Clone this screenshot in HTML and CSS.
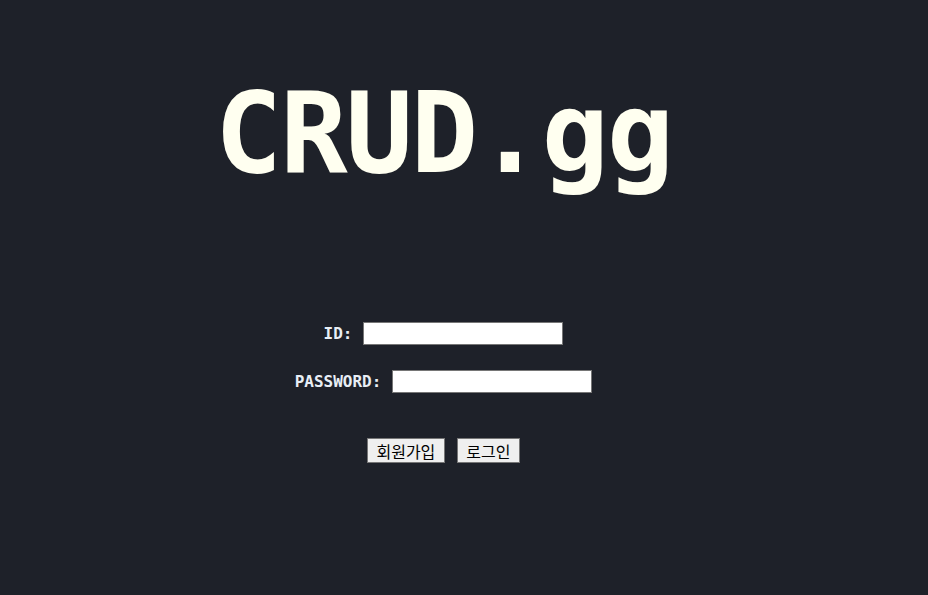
FILE: index.html
```html
<!DOCTYPE html>
<html lang="ko">
<head>
<meta charset="utf-8">
<title>CRUD.gg</title>
<link rel="stylesheet" href="styles.css">
</head>
<body>
<main class="page">
  <h1 class="logo">CRUD.gg</h1>
  <form class="login">
    <div class="row">
      <label class="label" for="id">ID:</label>
      <input class="field" id="id" type="text">
    </div>
    <div class="row">
      <label class="label" for="pw">PASSWORD:</label>
      <input class="field" id="pw" type="password">
    </div>
    <div class="actions">
      <button class="btn" type="button">회원가입</button>
      <button class="btn" type="submit">로그인</button>
    </div>
  </form>
</main>
</body>
</html>
```
FILE: styles.css
```css
html, body {
  margin: 0;
  padding: 0;
  background: #1e2129;
  height: 100%;
}
.page {
  box-sizing: border-box;
  padding: 77px 41px 0 0;
  display: flex;
  flex-direction: column;
  align-items: center;
}
.logo {
  margin: 0;
  font-family: "DejaVu Sans Mono", "Liberation Mono", monospace;
  font-weight: bold;
  font-size: 112px;
  line-height: 112px;
  letter-spacing: -2.1px;
  color: #fffff0;
}
.login {
  margin-top: 133px;
  display: flex;
  flex-direction: column;
  align-items: center;
  gap: 25px;
}
.row {
  display: flex;
  align-items: center;
  height: 23px;
}
.label {
  font-family: "DejaVu Sans Mono", "Liberation Mono", monospace;
  font-weight: bold;
  font-size: 16px;
  color: #e8eef5;
  margin-right: 11px;
}
.field {
  box-sizing: border-box;
  width: 200px;
  height: 23px;
  border: 1px solid #767676;
  padding: 1px 2px;
  background: #fff;
  margin: 0;
}
.actions {
  margin-top: 20px;
  display: flex;
  gap: 12px;
}
.btn {
  box-sizing: border-box;
  height: 25px;
  padding: 0 8.5px;
  border: 1px solid #767676;
  border-radius: 0;
  background: #efefef;
  color: #000;
  font-family: "Noto Sans CJK KR", sans-serif;
  font-size: 16px;
  line-height: 1;
}
```
